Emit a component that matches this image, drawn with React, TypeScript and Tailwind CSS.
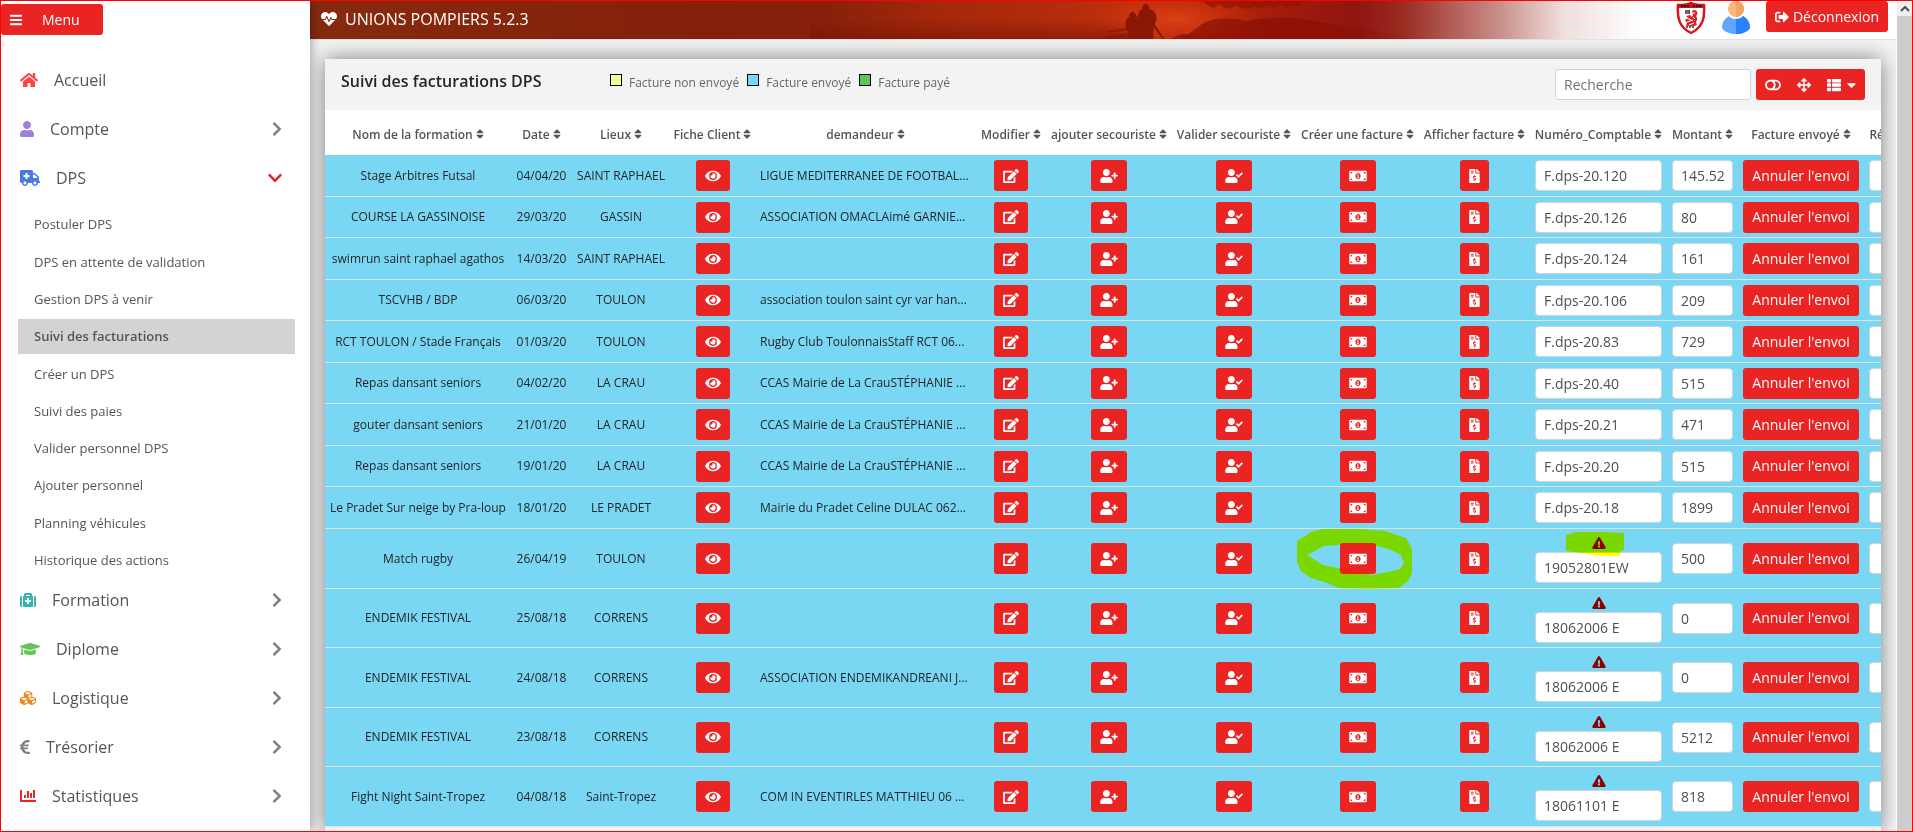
import type { ReactNode } from 'react'
import type { IconType } from 'react-icons'
import {
  FaAmbulance,
  FaArrowsAlt,
  FaBars,
  FaCaretDown,
  FaChartBar,
  FaChevronDown,
  FaChevronRight,
  FaCubes,
  FaEdit,
  FaEuroSign,
  FaExclamationTriangle,
  FaEye,
  FaFileInvoiceDollar,
  FaGraduationCap,
  FaHeartbeat,
  FaHome,
  FaMedkit,
  FaMoneyBillAlt,
  FaSignOutAlt,
  FaSort,
  FaThList,
  FaToggleOff,
  FaUser,
  FaUserCheck,
  FaUserPlus,
} from 'react-icons/fa'

type MenuEntry = {
  label: string
  Icon: IconType
  iconClass: string
  children?: string[]
  leaf?: boolean
}

type Invoice = {
  name: string
  date: string
  place: string
  client: string
  number: string
  amount: string
  warning?: boolean
  highlighted?: boolean
}

const MENU: MenuEntry[] = [
  { label: 'Accueil', Icon: FaHome, iconClass: 'w-[18px] text-[#ff4444]', leaf: true },
  { label: 'Compte', Icon: FaUser, iconClass: 'w-3.5 text-[#9f7fdb]' },
  {
    label: 'DPS',
    Icon: FaAmbulance,
    iconClass: 'w-5 text-[#4a7adf]',
    children: [
      'Postuler DPS',
      'DPS en attente de validation',
      'Gestion DPS à venir',
      'Suivi des facturations',
      'Créer un DPS',
      'Suivi des paies',
      'Valider personnel DPS',
      'Ajouter personnel',
      'Planning véhicules',
      'Historique des actions',
    ],
  },
  { label: 'Formation', Icon: FaMedkit, iconClass: 'w-4 text-[#3cb3b3]' },
  { label: 'Diplome', Icon: FaGraduationCap, iconClass: 'w-5 text-[#61c656]' },
  { label: 'Logistique', Icon: FaCubes, iconClass: 'w-4 text-[#e88b23]' },
  { label: 'Trésorier', Icon: FaEuroSign, iconClass: 'w-2.5 text-[#808080]' },
  { label: 'Statistiques', Icon: FaChartBar, iconClass: 'w-4 text-[#ea2323]' },
]

const ACTIVE_ENTRY = 'Suivi des facturations'

const LEGEND = [
  { label: 'Facture non envoyé', swatchClass: 'bg-[#ecff98]' },
  { label: 'Facture envoyé', swatchClass: 'bg-[#7ad7f4]' },
  { label: 'Facture payé', swatchClass: 'bg-[#5dc65a]' },
]

const COLUMNS = [
  { label: 'Nom de la formation', widthClass: 'w-[186px]' },
  { label: 'Date', widthClass: 'w-[61px]' },
  { label: 'Lieux', widthClass: 'w-[98px]' },
  { label: 'Fiche Client', widthClass: 'w-[85px]' },
  { label: 'demandeur', widthClass: 'w-[221px]' },
  { label: 'Modifier', widthClass: 'w-[70px]' },
  { label: 'ajouter secouriste', widthClass: 'w-[126px]' },
  { label: 'Valider secouriste', widthClass: 'w-[124px]' },
  { label: 'Créer une facture', widthClass: 'w-[123px]' },
  { label: 'Afficher facture', widthClass: 'w-[111px]' },
  { label: 'Numéro_Comptable', widthClass: 'w-[137px]' },
  { label: 'Montant', widthClass: 'w-[71px]' },
  { label: 'Facture envoyé', widthClass: 'w-[126px]' },
  { label: 'Réglement', widthClass: 'w-[84px]' },
]

const INVOICES: Invoice[] = [
  { name: 'Stage Arbitres Futsal', date: '04/04/20', place: 'SAINT RAPHAEL', client: 'LIGUE MEDITERRANEE DE FOOTBAL...', number: 'F.dps-20.120', amount: '145.52' },
  { name: 'COURSE LA GASSINOISE', date: '29/03/20', place: 'GASSIN', client: 'ASSOCIATION OMACLAimé GARNIE...', number: 'F.dps-20.126', amount: '80' },
  { name: 'swimrun saint raphael agathos', date: '14/03/20', place: 'SAINT RAPHAEL', client: '', number: 'F.dps-20.124', amount: '161' },
  { name: 'TSCVHB / BDP', date: '06/03/20', place: 'TOULON', client: 'association toulon saint cyr var han...', number: 'F.dps-20.106', amount: '209' },
  { name: 'RCT TOULON / Stade Français', date: '01/03/20', place: 'TOULON', client: 'Rugby Club ToulonnaisStaff RCT 06...', number: 'F.dps-20.83', amount: '729' },
  { name: 'Repas dansant seniors', date: '04/02/20', place: 'LA CRAU', client: 'CCAS Mairie de La CrauSTÉPHANIE ...', number: 'F.dps-20.40', amount: '515' },
  { name: 'gouter dansant seniors', date: '21/01/20', place: 'LA CRAU', client: 'CCAS Mairie de La CrauSTÉPHANIE ...', number: 'F.dps-20.21', amount: '471' },
  { name: 'Repas dansant seniors', date: '19/01/20', place: 'LA CRAU', client: 'CCAS Mairie de La CrauSTÉPHANIE ...', number: 'F.dps-20.20', amount: '515' },
  { name: 'Le Pradet Sur neige by Pra-loup', date: '18/01/20', place: 'LE PRADET', client: 'Mairie du Pradet Celine DULAC 062...', number: 'F.dps-20.18', amount: '1899' },
  { name: 'Match rugby', date: '26/04/19', place: 'TOULON', client: '', number: '19052801EW', amount: '500', warning: true, highlighted: true },
  { name: 'ENDEMIK FESTIVAL', date: '25/08/18', place: 'CORRENS', client: '', number: '18062006 E', amount: '0', warning: true },
  { name: 'ENDEMIK FESTIVAL', date: '24/08/18', place: 'CORRENS', client: 'ASSOCIATION ENDEMIKANDREANI J...', number: '18062006 E', amount: '0', warning: true },
  { name: 'ENDEMIK FESTIVAL', date: '23/08/18', place: 'CORRENS', client: '', number: '18062006 E', amount: '5212', warning: true },
  { name: 'Fight Night Saint-Tropez', date: '04/08/18', place: 'Saint-Tropez', client: 'COM IN EVENTIRLES MATTHIEU 06 ...', number: '18061101 E', amount: '818', warning: true },
]

const buttonClass =
  'inline-flex h-[31px] cursor-pointer items-center justify-center rounded-[3px] bg-[#ea2323] px-[9px] text-sm text-white hover:brightness-95'
const fieldClass =
  'block h-[31px] w-full rounded-[4px] border border-[#ced4da] bg-white px-2 text-sm text-[#495057]'

function IconButton({ Icon, label, iconClass }: { Icon: IconType; label: string; iconClass: string }) {
  return (
    <button type="button" aria-label={label} className={`${buttonClass} align-middle`}>
      <Icon className={`h-3.5 shrink-0 ${iconClass}`} />
    </button>
  )
}

function Cell({ children, className = 'text-center' }: { children?: ReactNode; className?: string }) {
  return (
    <td className={`whitespace-nowrap border-b border-[#dee2e6] px-[5px] py-0 align-middle ${className}`}>
      {children}
    </td>
  )
}

function Sidebar() {
  return (
    <aside className="relative z-10 flex w-[309px] shrink-0 flex-col bg-white shadow-[2px_0_10px_rgba(0,0,0,0.3)]">
      <button
        type="button"
        className="mt-[3px] flex h-[31px] w-[102px] cursor-pointer items-center gap-5 rounded-[3px] bg-[#ea2323] pl-[9px] text-sm text-white"
      >
        <FaBars className="h-3.5 w-3" />
        Menu
      </button>
      <nav className="mt-6">
        <ul>
          {MENU.map(({ label, Icon, iconClass, children, leaf }) => (
            <li key={label}>
              <a href="#" className="mb-2 flex h-[41px] items-center pl-[19px] pr-7 text-base text-[#555]">
                <Icon className={`mr-4 h-4 shrink-0 ${iconClass}`} />
                <span className="flex-1">{label}</span>
                {leaf ? null : children ? (
                  <FaChevronDown className="h-4 w-3.5 text-[#ea2323]" />
                ) : (
                  <FaChevronRight className="h-4 w-2.5 text-[#808080]" />
                )}
              </a>
              {children ? (
                <ul className="flex h-[373px] flex-col pl-[17px] pr-[15px]">
                  {children.map((child) => (
                    <li key={child} className="flex flex-1 items-center">
                      <a
                        href="#"
                        className={`flex h-[35px] w-full items-center pl-4 pt-px text-[13px] text-[#555] ${
                          child === ACTIVE_ENTRY ? 'bg-[#d3d3d3] font-semibold' : ''
                        }`}
                      >
                        {child}
                      </a>
                    </li>
                  ))}
                </ul>
              ) : null}
            </li>
          ))}
        </ul>
      </nav>
    </aside>
  )
}

function FireBanner() {
  return (
    <svg
      className="absolute inset-0 h-full w-full"
      viewBox="0 0 1587 38"
      preserveAspectRatio="none"
      aria-hidden
    >
      <defs>
        <linearGradient id="fire" x1="0" x2="1" y1="0" y2="0">
          <stop offset="0" stopColor="#862a0e" />
          <stop offset="0.25" stopColor="#84200a" />
          <stop offset="0.32" stopColor="#86200a" />
          <stop offset="0.4" stopColor="#a5280b" />
          <stop offset="0.46" stopColor="#b02b0c" />
          <stop offset="0.52" stopColor="#c0300c" />
          <stop offset="0.57" stopColor="#b52208" />
          <stop offset="0.62" stopColor="#a01a0c" />
          <stop offset="0.66" stopColor="#8e1610" />
          <stop offset="0.69" stopColor="#9a2c22" />
          <stop offset="0.75" stopColor="#c98f89" />
          <stop offset="0.79" stopColor="#efdedd" />
          <stop offset="0.84" stopColor="#ffffff" />
        </linearGradient>
        <radialGradient id="glow">
          <stop offset="0" stopColor="#e04417" stopOpacity="0.9" />
          <stop offset="1" stopColor="#d03410" stopOpacity="0" />
        </radialGradient>
        <linearGradient id="bush" x1="0" x2="1" y1="0" y2="0">
          <stop offset="0" stopColor="#7d0d03" stopOpacity="0.6" />
          <stop offset="0.6" stopColor="#8a0d05" stopOpacity="0.7" />
          <stop offset="1" stopColor="#8a1208" stopOpacity="0" />
        </linearGradient>
        <linearGradient id="ground" x1="0" x2="0" y1="0" y2="1">
          <stop offset="0" stopColor="#7a1404" stopOpacity="0" />
          <stop offset="1" stopColor="#7a1404" stopOpacity="0.6" />
        </linearGradient>
      </defs>
      <rect width="1587" height="38" fill="url(#fire)" />
      <rect x="500" y="18" width="320" height="20" fill="url(#ground)" />
      <ellipse cx="868" cy="18" rx="85" ry="28" fill="url(#glow)" />
      <path d="M868 38c12-3 16-10 28-17 12-5 30-4 42-1 24-5 50-4 80 2l92 16z" fill="url(#bush)" />
      <path
        d="M890 0h104l-5 5-6-2-5 4-7-3-6 3-7-3-6 4-8-3-5 3-7-1-5-3-6 4-7-2-4-3-6 4-6-3-4-3z"
        fill="#8d1404"
        opacity="0.65"
      />
      <path
        d="M819 38c0-4-1-7-2-10-2-6-1-11 3-12-1-6 6-7 7-1l1 2c0-4 2-8 5-9-1-7 7-7 7 0 5 1 7 5 7 9 0 3-1 5-2 6l10 15h-2l-9-12v12z"
        fill="#8a1606"
      />
      <path d="M797 30l22-3v2l-19 3zM800 34l18-2v6h-28zM862 38c5-5 12-6 20-4l10 4z" fill="#8a1606" opacity="0.7" />
    </svg>
  )
}

function ShieldLogo() {
  return (
    <svg className="h-[34px] w-[30px]" viewBox="0 0 30 34" role="img" aria-label="Union">
      <path
        d="M2 4C7 4 11 4 15 2c4 2 8 2 13 2 1 13-1 22-13 28C3 26 1 17 2 4z"
        fill="#fff"
        stroke="#d01820"
        strokeWidth="2.5"
      />
      <path d="M2 3c5 0 9 0 13-2 4 2 8 2 13 2v4H2z" fill="#c5161e" />
      <path d="M5 5h8M17 5h8" stroke="#2b0b0e" strokeWidth="2" strokeDasharray="2 1" />
      <path d="M9 9h5v4H9z" fill="#444" />
      <path d="M10 9v4M12 9v4" stroke="#ddd" strokeWidth="0.5" />
      <path
        d="M16 10c2-2 5-1 5 1 1 2 0 3-1 4 2 2 1 5 0 6l1 3c-3 2-7 1-11 1l1-3-2-3 3-2-2-2 4-1 2 2 1-3z"
        fill="#d8252d"
      />
      <path d="M11 17l4 2M11 21l6-2M13 24l5-2M17 12h2M17 16l2 2" stroke="#fff" />
      <path d="M10 26h9" stroke="#333" strokeWidth="1.5" strokeDasharray="2 1" />
    </svg>
  )
}

function AvatarIcon() {
  return (
    <svg className="h-[33px] w-7" viewBox="0 0 28 33" role="img" aria-label="Profil">
      <circle cx="14" cy="8" r="8" fill="#f9b87c" />
      <path d="M14 0a8 8 0 0 1 0 16z" fill="#f3a364" />
      <path d="M7 15c2 4 12 4 14 0 5 3 7 7 7 12-5 8-23 8-28 0 0-5 2-9 7-12z" fill="#63a4ff" />
      <path d="M14 18c3 0 6-1 7-3 5 3 7 7 7 12-3 4-8 6-14 6z" fill="#2682ff" />
    </svg>
  )
}

function TopBar() {
  return (
    <header className="relative flex h-[39px] shrink-0 items-center border-b border-[#dee2e6] bg-white">
      <FireBanner />
      <div className="relative flex flex-1 items-center gap-2 pb-0.5 pl-[11px] text-base text-white">
        <FaHeartbeat className="h-4 w-4" />
        UNIONS POMPIERS 5.2.3
      </div>
      <div className="relative flex items-start gap-4 pr-2 pb-1">
        <ShieldLogo />
        <AvatarIcon />
        <button type="button" className={`${buttonClass} gap-1`}>
          <FaSignOutAlt className="h-3.5 w-3.5" />
          Déconnexion
        </button>
      </div>
    </header>
  )
}

function Toolbar() {
  return (
    <div className="flex h-[51px] items-start bg-[#f3f3f3] px-4">
      <h1 className="w-[269px] pt-2.5 text-base font-semibold text-[#212529]">
        Suivi des facturations DPS
      </h1>
      <ul className="flex gap-2 pt-[13px] text-xs text-[#666]">
        {LEGEND.map(({ label, swatchClass }) => (
          <li key={label} className="flex items-start gap-[7px]">
            <span className={`mt-0.5 h-3 w-3 border border-black ${swatchClass}`} />
            <span className="pt-[3px]">{label}</span>
          </li>
        ))}
      </ul>
      <div className="ml-auto flex gap-[5px] pt-2.5">
        <input
          type="search"
          aria-label="Recherche"
          placeholder="Recherche"
          className="h-[31px] w-[196px] rounded-[3px] border border-[#ced4da] bg-white px-2 text-sm placeholder:text-[#6c757d]"
        />
        <div className="flex h-[31px] items-center overflow-hidden rounded-[3px] bg-[#ea2323] px-px text-sm text-white">
          <button type="button" aria-label="Basculer la vue" className="h-full cursor-pointer px-2">
            <FaToggleOff className="h-3.5 w-4" />
          </button>
          <button type="button" aria-label="Plein écran" className="h-full cursor-pointer px-2">
            <FaArrowsAlt className="h-3.5 w-3.5" />
          </button>
          <button type="button" aria-label="Colonnes" className="flex h-full cursor-pointer items-center gap-1.5 px-2">
            <FaThList className="h-3.5 w-3.5" />
            <FaCaretDown className="h-3.5 w-[9px]" />
          </button>
        </div>
      </div>
    </div>
  )
}

// Marker strokes laid over the cell, multiplied with what is below.
function CircleMark() {
  return (
    <svg
      className="pointer-events-none absolute left-1/2 top-1/2 h-[62px] w-[124px] -translate-x-1/2 -translate-y-1/2 mix-blend-multiply"
      viewBox="0 0 124 62"
      aria-hidden
    >
      <path
        fillRule="evenodd"
        d="M1 13L15 4 27 1h38l24 2 21 7 6 11v24l-4 8-9 7-30 1-30-1-12-5-16-5-10-7-4-9zM11 27l16 10 26 5 23 5 16-3 12-3 4-6-3-8-12-6-16-4-24-1-25 2z"
        fill="#ffff00"
      />
    </svg>
  )
}

function WarningMark() {
  return (
    <svg
      className="pointer-events-none absolute left-1/2 top-0 h-7 w-[66px] -translate-x-1/2 mix-blend-multiply"
      viewBox="0 0 66 28"
      aria-hidden
    >
      <path d="M0 6l10-3h28l20 1v17l-4 1v5H36l-22-3-14-2z" fill="#ffff00" />
    </svg>
  )
}

function InvoiceRow({ invoice }: { invoice: Invoice }) {
  const { name, date, place, client, number, amount, warning, highlighted } = invoice
  return (
    <tr className={`bg-[#7ad7f4] ${warning ? 'h-[59px] even:h-[60px]' : 'h-[42px] even:h-[41px]'}`}>
      <Cell>{name}</Cell>
      <Cell>{date}</Cell>
      <Cell>{place}</Cell>
      <Cell>
        <IconButton Icon={FaEye} iconClass="w-4" label="Fiche client" />
      </Cell>
      <Cell className="text-left">{client}</Cell>
      <Cell>
        <IconButton Icon={FaEdit} iconClass="w-4" label="Modifier" />
      </Cell>
      <Cell>
        <IconButton Icon={FaUserPlus} iconClass="w-[18px]" label="Ajouter secouriste" />
      </Cell>
      <Cell>
        <IconButton Icon={FaUserCheck} iconClass="w-[18px]" label="Valider secouriste" />
      </Cell>
      <Cell className="relative text-center">
        <IconButton Icon={FaMoneyBillAlt} iconClass="w-[18px]" label="Créer une facture" />
        {highlighted ? <CircleMark /> : null}
      </Cell>
      <Cell>
        <IconButton Icon={FaFileInvoiceDollar} iconClass="w-[11px]" label="Afficher facture" />
      </Cell>
      <Cell className="relative text-center">
        {warning ? <FaExclamationTriangle className="mx-auto my-[3px] h-3 w-3.5 text-[#8b0000]" /> : null}
        <input aria-label={`Numéro comptable ${name} ${date}`} defaultValue={number} className={fieldClass} />
        {highlighted ? <WarningMark /> : null}
      </Cell>
      <Cell>
        <input aria-label={`Montant ${name} ${date}`} defaultValue={amount} className={fieldClass} />
      </Cell>
      <Cell>
        <button type="button" className={`${buttonClass} w-full whitespace-nowrap align-middle`}>
          Annuler l'envoi
        </button>
      </Cell>
      <Cell>
        <input aria-label={`Réglement ${name} ${date}`} className={fieldClass} />
      </Cell>
    </tr>
  )
}

function InvoiceTable() {
  return (
    <div className="overflow-hidden">
      <table className="w-[1623px] table-fixed border-separate border-spacing-0 text-xs text-[#212529]">
        <thead>
          <tr className="h-[45px] bg-white text-[#555]">
            {COLUMNS.map(({ label, widthClass }) => (
              <th
                key={label}
                scope="col"
                className={`whitespace-nowrap px-0 pt-1 pb-0 text-center align-middle font-semibold ${widthClass}`}
              >
                {label}
                <FaSort className="ml-[3px] inline h-3 w-2 align-[-1px]" />
              </th>
            ))}
          </tr>
        </thead>
        <tbody>
          {INVOICES.map((invoice) => (
            <InvoiceRow key={`${invoice.name}-${invoice.date}`} invoice={invoice} />
          ))}
        </tbody>
      </table>
    </div>
  )
}

function ScrollRail() {
  return (
    <div className="flex w-4 shrink-0 flex-col border-l border-white bg-[#cdcdcd]" aria-hidden>
      <div className="flex h-[15px] items-center justify-center bg-[#f0f0f0]">
        <svg className="h-2 w-2.5" viewBox="0 0 10 8">
          <path d="M1 6l4-4 4 4" fill="none" stroke="#505050" strokeWidth="2" />
        </svg>
      </div>
    </div>
  )
}

export default function App() {
  return (
    <div className="flex h-screen overflow-hidden border border-[#ff0000] bg-[#f4f4f4] font-['Open_Sans',sans-serif]">
      <Sidebar />
      <div className="flex min-w-0 flex-1 flex-col">
        <TopBar />
        <main className="min-h-0 flex-1 overflow-hidden pl-[15px] pr-[15px] pt-[19px]">
          <section className="min-h-full bg-[#f3f3f3] shadow-[0_0_20px_rgba(0,0,0,0.5)]">
            <Toolbar />
            <InvoiceTable />
          </section>
        </main>
      </div>
      <ScrollRail />
    </div>
  )
}
